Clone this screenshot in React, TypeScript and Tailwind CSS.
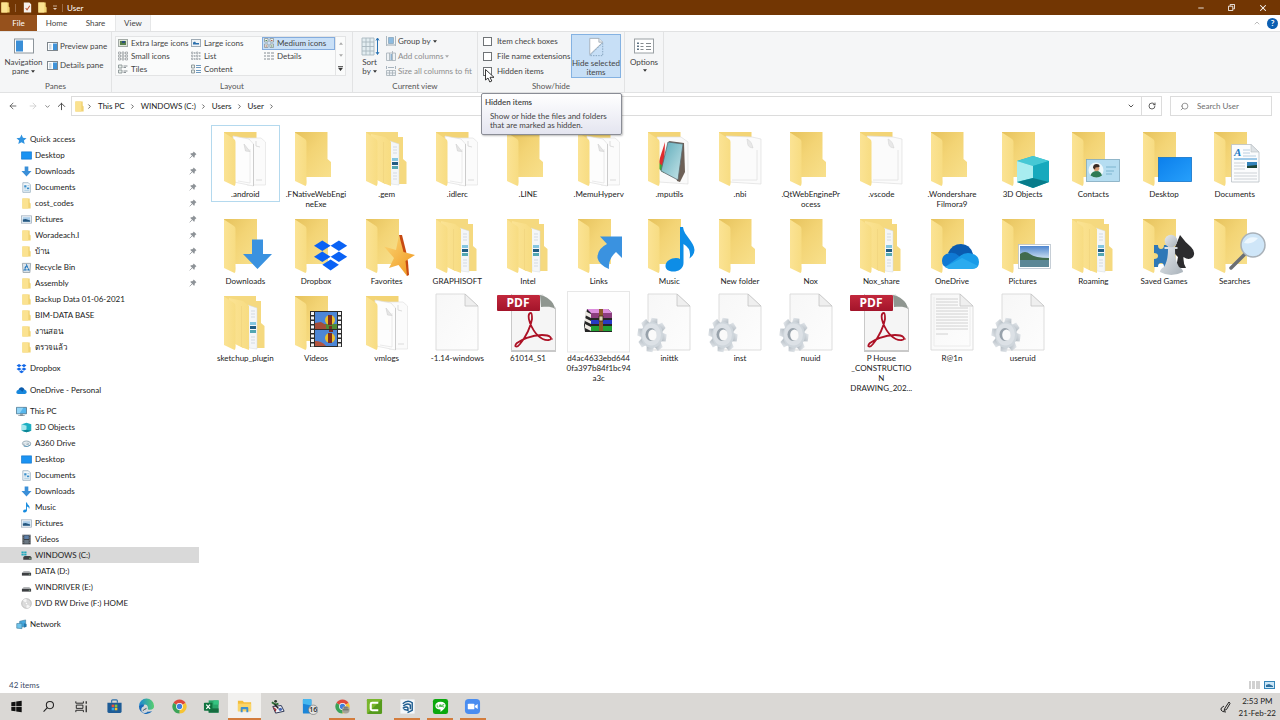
import type { ReactNode } from "react";
import {
  ArrowLeft,
  ArrowRight,
  ArrowUp,
  ChevronDown,
  ChevronRight,
  ChevronUp,
  Minus,
  RotateCw,
  Search,
  X,
} from "lucide-react";
import { clsx } from "clsx";

type Entry = {
  lines: string[];
  icon: ReactNode;
  focused?: boolean;
};

/* ---------- shared gradients ---------- */

function Gradients() {
  return (
    <svg className="absolute h-0 w-0" aria-hidden="true">
      <defs>
        <linearGradient id="flap" x1="0" y1="0" x2="1" y2="0">
          <stop offset="0" stopColor="#fbe394" />
          <stop offset="1" stopColor="#f7dc82" />
        </linearGradient>
        <linearGradient id="back" x1="0" y1="0" x2="1" y2="1">
          <stop offset="0" stopColor="#e6c25c" />
          <stop offset="0.45" stopColor="#f3d475" />
          <stop offset="1" stopColor="#f8e08c" />
        </linearGradient>
        <linearGradient id="sheet" x1="0" y1="0" x2="1" y2="1">
          <stop offset="0" stopColor="#f7f7f7" />
          <stop offset="1" stopColor="#fdfdfd" />
        </linearGradient>
        <linearGradient id="blue" x1="0" y1="0" x2="1" y2="1">
          <stop offset="0" stopColor="#0b7fec" />
          <stop offset="1" stopColor="#27a0fb" />
        </linearGradient>
        <linearGradient id="gold" x1="0" y1="0" x2="1" y2="1">
          <stop offset="0" stopColor="#fbd877" />
          <stop offset="1" stopColor="#f0951d" />
        </linearGradient>
        <linearGradient id="grey" x1="0" y1="0" x2="1" y2="1">
          <stop offset="0" stopColor="#e6eaee" />
          <stop offset="1" stopColor="#a9b2ba" />
        </linearGradient>
        <linearGradient id="sky" x1="0" y1="0" x2="0" y2="1">
          <stop offset="0" stopColor="#4f86cf" />
          <stop offset="1" stopColor="#dceaf5" />
        </linearGradient>
        <linearGradient id="red" x1="0" y1="0" x2="0" y2="1">
          <stop offset="0" stopColor="#c2283c" />
          <stop offset="1" stopColor="#a3142a" />
        </linearGradient>
        <linearGradient id="pad" x1="0" y1="0" x2="1" y2="1">
          <stop offset="0" stopColor="#5aa9b8" />
          <stop offset="1" stopColor="#c9e6ea" />
        </linearGradient>
        <linearGradient id="edge" x1="0" y1="0" x2="1" y2="0">
          <stop offset="0" stopColor="#1a86d6" />
          <stop offset="1" stopColor="#58cf6e" />
        </linearGradient>
      </defs>
    </svg>
  );
}

/* ---------- large icons, 64 x 64 ---------- */

function Big({ children }: { children: ReactNode }) {
  return (
    <svg viewBox="0 0 64 64" className="size-16 shrink-0" aria-hidden="true">
      {children}
    </svg>
  );
}

const Flap = () => <path d="M11 7.5 21 14Q22.500 15 22.500 17V54Q23 60 21.500 61L11 56Z" fill="url(#flap)" />;
const BackStraight = () => <path d="M11 7H44V52H22L11 46Z" fill="url(#back)" />;

function EmptyFolder() {
  return (
    <Big>
      <path d="M11 7H43.500V34L47 37V52H22L11 46Z" fill="url(#back)" />
      <Flap />
    </Big>
  );
}

function OverlayFolder({ children }: { children: ReactNode }) {
  return (
    <Big>
      <BackStraight />
      <Flap />
      {children}
    </Big>
  );
}

function PapersFolder() {
  return (
    <Big>
      <path d="M11 7H43.500V20H11Z" fill="#f3d475" />
      <path d="M30 13H48L52.500 17V60H34Z" fill="#fbfbfb" stroke="#e2e2e2" strokeWidth=".7" />
      <path d="M43 16v5l4 1M43 55h6" fill="none" stroke="#d4d4d4" strokeWidth=".8" />
      <path d="M20 11 36 14 40.500 19V61L21 57Z" fill="#fdfdfd" stroke="#e0e0e0" strokeWidth=".7" />
      <path d="M25 56 37 58V24" fill="none" stroke="#e4e4e4" strokeWidth=".8" />
      <path d="M31 19 32.500 26 37 26.500Z" fill="#e6e6e6" stroke="#cfcfcf" strokeWidth=".6" />
      <path d="M40.500 19V61" stroke="#cccccc" />
      <Flap />
    </Big>
  );
}

function PaperFolder() {
  return (
    <Big>
      <path d="M11 7H43.500V20H11Z" fill="#f3d475" />
      <path d="M18 11 44 12 53 14V59L21 57Z" fill="#fbfbfb" stroke="#dedede" strokeWidth=".7" />
      <path d="M24 55H49V25" fill="none" stroke="#e2e2e2" strokeWidth=".8" />
      <path d="M39 14c1 6 0 8 6 9-1-4-2-7-6-9Z" fill="#e8e8e8" stroke="#cfcfcf" strokeWidth=".5" />
      <Flap />
    </Big>
  );
}

function NestedFolder() {
  return (
    <Big>
      <path d="M11 7H43V12L48 12V34L51.500 37V59H30L11 46Z" fill="#f5d97f" />
      <path d="M35 16 44 19V60L36 59Z" fill="#f4f6f8" stroke="#d5dade" strokeWidth=".5" />
      <path d="M37 33h6v3h-6Z" fill="#84c6e0" />
      <path d="M37 37h6v3h-6Z" fill="#205c82" />
      <path d="M37 41h6v3h-6Z" fill="#53a7b2" />
      <path d="M38 22h4M38 25h4M38 28h4M38 48h4M38 51h4M38 54h4" stroke="#d3dae2" />
      <path d="M16 9 30 12 36 17V61L28 58 16 52Z" fill="url(#flap)" />
      <path d="M28.500 17V58" stroke="#efd27c" strokeWidth=".6" />
      <Flap />
    </Big>
  );
}

function MpUtilsFolder() {
  return (
    <Big>
      <path d="M11 7H43.500V20H11Z" fill="#f3d475" />
      <path d="M20 12 44 12 51 17V59L22 57Z" fill="#fafafa" stroke="#dedede" strokeWidth=".7" />
      <path d="M28 17 22 36V44L27 42Z" fill="#df2b2e" />
      <path d="M22 38 27 42V48L22 44Z" fill="#3aab35" />
      <path d="M32 16 47 18 48 47 43 57 40 56Z" fill="#6d6057" />
      <path d="M31 17 46 19 41 55 24 46Z" fill="url(#pad)" stroke="#5d686d" strokeWidth=".8" />
      <Flap />
    </Big>
  );
}

function Diamonds() {
  return (
    <g fill="#0a62f5">
      <path d="m38.300 28.500 8.300 5.300-8.300 5.300-8.300-5.300Z" />
      <path d="m54.900 28.500 8.300 5.300-8.300 5.300-8.300-5.300Z" />
      <path d="m38.300 39.500 8.300 5.300-8.300 5.300-8.300-5.300Z" />
      <path d="m54.900 39.500 8.300 5.300-8.300 5.300-8.300-5.300Z" />
      <path d="m46.600 47.500 8.300 5.300-8.300 5.700-8.300-5.700Z" />
    </g>
  );
}

function Sheet({ children }: { children?: ReactNode }) {
  return (
    <>
      <path d="M11 5H40L53 17V61H11Z" fill="url(#sheet)" stroke="#d9d9d9" strokeWidth=".9" />
      {children}
      <path d="M40 5V17H53Z" fill="#efefef" stroke="#c4c4c4" strokeWidth=".8" />
    </>
  );
}

function GearFile() {
  const teeth = [0, 45, 90, 135, 180, 225, 270, 315];
  return (
    <Big>
      <Sheet />
      <g transform="translate(1.500 2)">
        {teeth.map((angle) => (
          <path key={angle} d="M-3.500-17H3.500L4.500-10H-4.500Z" transform={`translate(13.500 44) scale(.85 1) rotate(${angle + 10})`} fill="url(#grey)" />
        ))}
        <ellipse cx="13.500" cy="44" rx="11" ry="13" fill="#cfd6dc" />
        <ellipse cx="13" cy="43.500" rx="9.500" ry="11" fill="#dce1e6" />
        <ellipse cx="12.500" cy="43.500" rx="5.500" ry="6.500" fill="#98a2ab" />
        <ellipse cx="14" cy="44" rx="4.300" ry="5.500" fill="#fafafa" />
      </g>
    </Big>
  );
}

function PdfFile() {
  return (
    <Big>
      <path d="M15 5H46L60 19V63H15Z" fill="#c9c9c9" />
      <path d="M16 5H46L59 18V61H16Z" fill="#f5f5f5" />
      <path d="M44 6C50 7 58 12 59 20 55 17 50 18 45 18Z" fill="#8f9690" />
      <rect x="1" y="6" width="43" height="16" rx="1" fill="url(#red)" />
      <text x="22" y="18" textAnchor="middle" fontSize="12" fontWeight="700" fill="#fff" fontFamily="Open Sans">
        PDF
      </text>
      <g fill="none" stroke="#ad1226" strokeWidth="1.800">
        <path d="M35 24c-3 0-3 5-1 10 4 10 11 18 19 17 4-1 2-5-7-5-11 0-21 5-25 8-4 4 0 5 3 1 6-7 11-18 12-25 0-4 0-6-1-6Z" />
      </g>
      <circle cx="56" cy="50" r=".8" fill="#ad1226" />
    </Big>
  );
}

function ArchiveFile() {
  return (
    <Big>
      <rect x=".5" y="2.500" width="62" height="60.500" fill="#fefefe" stroke="#e7e7e7" />
      <path d="M20 20 41 20 45 24V43H18L17 36Z" fill="#252525" />
      <path d="M20 20H41L45 24H24Z" fill="#dc8edd" />
      <path d="M24 24H45V29H24Z" fill="#8c3d7e" />
      <path d="M24 31H45V35H24Z" fill="#2739c4" />
      <path d="M24 37H45V42H24Z" fill="#22a033" />
      <path d="M18 22 24 25V29L18 26ZM18 29 24 32V35L18 32ZM18 35 24 38V42L18 39Z" fill="#ece8e2" />
      <path d="M32 20h4V42h-4Z" fill="#8a5a28" />
      <path d="M32 27h4v5h-4Z" fill="#d9d2b0" stroke="#3a2a18" strokeWidth=".8" />
    </Big>
  );
}

const entries: Entry[] = [
  { lines: [".android"], icon: <PapersFolder />, focused: true },
  { lines: [".FNativeWebEngi", "neExe"], icon: <EmptyFolder /> },
  { lines: [".gem"], icon: <NestedFolder /> },
  { lines: [".idlerc"], icon: <PapersFolder /> },
  { lines: [".LINE"], icon: <EmptyFolder /> },
  { lines: [".MemuHyperv"], icon: <PapersFolder /> },
  { lines: [".mputils"], icon: <MpUtilsFolder /> },
  { lines: [".nbi"], icon: <PaperFolder /> },
  { lines: [".QtWebEnginePr", "ocess"], icon: <EmptyFolder /> },
  { lines: [".vscode"], icon: <PaperFolder /> },
  { lines: [".Wondershare", "Filmora9"], icon: <EmptyFolder /> },
  {
    lines: ["3D Objects"],
    icon: (
      <OverlayFolder>
        <path d="M42 31 58 36V57L42 63 26 57V36Z" fill="#1fb5c6" />
        <path d="M42 31 58 36 42 41 26 36Z" fill="#46c8d5" />
        <path d="M26 36 42 41V53L26 57Z" fill="#a8edf0" />
        <path d="M42 41V53L58 57V36Z" fill="#17a9bd" />
        <path d="M26 57 42 53 58 57 42 63Z" fill="#087c8b" />
      </OverlayFolder>
    ),
  },
  {
    lines: ["Contacts"],
    icon: (
      <OverlayFolder>
        <rect x="25.500" y="34.500" width="33" height="22" fill="#b5ddf1" stroke="#7fa8be" strokeWidth=".8" />
        <circle cx="35" cy="45" r="7.500" fill="#eef8fb" />
        <path d="M29.500 50.500q1-4 5.500-4.500t6 4.500q-5.500 4-11.500 0Z" fill="#2f7a55" />
        <circle cx="35.500" cy="43.500" r="2.800" fill="#d9a07a" />
        <path d="M32 43q0-4 3.500-4t3 3l-4 .5-.5 2Z" fill="#3a2b24" />
        <path d="M45 42h10M45 46h8M45 49h6" stroke="#7cb5cf" />
      </OverlayFolder>
    ),
  },
  {
    lines: ["Desktop"],
    icon: (
      <OverlayFolder>
        <rect x="26.500" y="32.500" width="33" height="24" fill="url(#blue)" stroke="#1273c9" strokeWidth=".8" />
      </OverlayFolder>
    ),
  },
  {
    lines: ["Documents"],
    icon: (
      <OverlayFolder>
        <path d="M28.500 19.500H48L56 27V57H28.500Z" fill="#fbfcfd" stroke="#b9bfc4" strokeWidth=".8" />
        <path d="M48 19.500V27H56Z" fill="#dfe3e6" stroke="#b9bfc4" strokeWidth=".6" />
        <text x="31" y="31" fontSize="11" fontStyle="italic" fontWeight="700" fontFamily="Liberation Serif" fill="#1a78c2">
          A
        </text>
        <path d="M40 25h7M40 28h7M40 31h13" stroke="#a9c4d8" strokeWidth=".8" />
        <path d="M31 34H54" stroke="#3f95d2" />
        <path d="M31 38h11M31 41h11M31 44h11M31 48h23M31 51h23M31 54h23" stroke="#c3c8cd" strokeWidth=".8" />
        <path d="M44 37H54V43H44Z" fill="#3584bb" />
        <path d="M44 41 54 40V43H44Z" fill="#1d4536" />
      </OverlayFolder>
    ),
  },
  {
    lines: ["Downloads"],
    icon: (
      <OverlayFolder>
        <path d="M39 27.500H50V42H59L44.500 57 30 42H39Z" fill="#3a92e0" />
      </OverlayFolder>
    ),
  },
  {
    lines: ["Dropbox"],
    icon: (
      <OverlayFolder>
        <Diamonds />
      </OverlayFolder>
    ),
  },
  {
    lines: ["Favorites"],
    icon: (
      <OverlayFolder>
        <path d="M44 23 47 23 51 39 53 50 54 63 52 64 47 50Z" fill="#c74a12" />
        <path d="M44 23 48.500 40 60 43 50.500 49 52 64 43.500 53 34 56 39 46 29 34.500 41 38Z" fill="url(#gold)" />
      </OverlayFolder>
    ),
  },
  { lines: ["GRAPHISOFT"], icon: <NestedFolder /> },
  { lines: ["Intel"], icon: <NestedFolder /> },
  {
    lines: ["Links"],
    icon: (
      <OverlayFolder>
        <path d="M33 24.500H55V46L49 40Q41 47 42 57 32 53 30.500 46 30 37 40 32Z" fill="#3a92e0" />
      </OverlayFolder>
    ),
  },
  {
    lines: ["Music"],
    icon: (
      <OverlayFolder>
        <path d="M43 15H46C47 24 57 29 57.500 38Q57.500 43 52.500 46.500 55 37 46.500 32V51C46.500 57 41 59.500 36.500 59.500 31 59.500 28.500 57 28.500 54 28.500 49 34 46 39 46Q42 46 43 47Z" fill="#0d8de6" />
      </OverlayFolder>
    ),
  },
  { lines: ["New folder"], icon: <EmptyFolder /> },
  { lines: ["Nox"], icon: <EmptyFolder /> },
  { lines: ["Nox_share"], icon: <NestedFolder /> },
  {
    lines: ["OneDrive"],
    icon: (
      <OverlayFolder>
        <path d="M28 41Q32 32 41 32 50 32 53 42L40 50Z" fill="#0a5bb0" />
        <path d="M22 49Q22 42 30 41 36 40 41 46L57 56H30Q22 56 22 49Z" fill="#0f79d4" />
        <path d="M39 45Q45 39 53 42 59 44 59 50 59 57 52 57H29L25 55Z" fill="#189be8" />
        <path d="M25 55 42 46 58 54Q55 57 52 57H29Z" fill="#32b2f2" opacity=".7" />
      </OverlayFolder>
    ),
  },
  {
    lines: ["Pictures"],
    icon: (
      <OverlayFolder>
        <rect x="27.500" y="32.500" width="32" height="24" fill="#fff" stroke="#b8c3cc" strokeWidth=".8" />
        <path d="M29 34H58V48H29Z" fill="url(#sky)" />
        <path d="M29 42q5-4 10 0t19 4v3H29Z" fill="#416b4e" />
        <path d="M29 48H58V55H29Z" fill="#5b8796" />
      </OverlayFolder>
    ),
  },
  { lines: ["Roaming"], icon: <NestedFolder /> },
  {
    lines: ["Saved Games"],
    icon: (
      <OverlayFolder>
        <path d="M22 33h4q0 4 3 4t3-4h4V55h-4q0-4-3-4t-3 4h-4V47q4 0 4-3t-4-3Z" fill="#2f78b7" />
        <path d="M48 23Q53 30 59 35 64 40 61 45 57 49 51.500 45 51 51 54 56H44L46 45 41 40Z" fill="#2c2c2e" />
        <path d="M32.500 35h13v2H43q0 12 4 18 4 2 4 5-12 6-23 0 0-3 4-5 4-6 4-18h-3.500Z" fill="url(#grey)" />
        <circle cx="39" cy="29" r="6.300" fill="url(#grey)" />
      </OverlayFolder>
    ),
  },
  {
    lines: ["Searches"],
    icon: (
      <OverlayFolder>
        <path d="M42 42 28 56" stroke="#6b6f74" strokeWidth="3.500" strokeLinecap="round" />
        <circle cx="50" cy="33" r="12" fill="#cfe6f8" stroke="#a9b1b8" strokeWidth="1.500" />
        <path d="M41 31Q45 23 55 26 50 33 41 31Z" fill="#edf7fe" />
      </OverlayFolder>
    ),
  },
  { lines: ["sketchup_plugin"], icon: <NestedFolder /> },
  {
    lines: ["Videos"],
    icon: (
      <OverlayFolder>
        <rect x="26" y="22" width="32" height="36" fill="#2b2b2b" />
        <path d="M28.500 23V58M55.500 23V58" stroke="#f4f4f4" strokeWidth="3" strokeDasharray="3 1.500" />
        <rect x="31" y="23" width="22" height="17" fill="#4c86d6" />
        <rect x="31" y="41" width="22" height="16" fill="#4c86d6" />
        <path d="M31 35h22v5H31Z" fill="#4f8a35" />
        <path d="M31 34l6-1 5 3v4H31Z" fill="#a44d38" />
        <path d="M31 52q7 0 11 5H31Z" fill="#b3543f" />
        <circle cx="46" cy="31" r="5" fill="#ebc02c" />
        <path d="M44 26h4v10h-4ZM45 37h3v3h-3Z" fill="#7c2c1f" />
        <circle cx="46" cy="49" r="5" fill="#ebc02c" />
        <path d="M44 44h4v10h-4ZM45 41h4v2h-4Z" fill="#7c2c1f" />
      </OverlayFolder>
    ),
  },
  { lines: ["vmlogs"], icon: <PapersFolder /> },
  { lines: ["-1.14-windows"], icon: <Big><Sheet /></Big> },
  { lines: ["61014_S1"], icon: <PdfFile /> },
  { lines: ["d4ac4633ebd644", "0fa397b84f1bc94", "a3c"], icon: <ArchiveFile /> },
  { lines: ["inittk"], icon: <GearFile /> },
  { lines: ["inst"], icon: <GearFile /> },
  { lines: ["nuuid"], icon: <GearFile /> },
  { lines: ["P House", "_CONSTRUCTIO", "N", "DRAWING_202..."], icon: <PdfFile /> },
  {
    lines: ["R@1n"],
    icon: (
      <Big>
        <Sheet>
          <path
            d="M16 10h22M16 13h22M16 16h22M16 19h32M16 22h32M16 25h32M16 28h32M16 31h32M16 34h32M16 37h32M16 40h32M16 45h12"
            stroke="#cdcdcd"
            strokeWidth=".9"
          />
          <path d="M14 8V57H50V18" fill="none" stroke="#ececec" />
        </Sheet>
      </Big>
    ),
  },
  { lines: ["useruid"], icon: <GearFile /> },
];

/* ---------- small icons, 12 x 12 ---------- */

const smallShapes: Record<string, ReactNode> = {
  folder: (
    <>
      <path d="M1.500 .5H9.500V5L10.500 6V11.500H1.500Z" fill="#f0d272" />
      <path d="M1.500 .5H8V11.500H1.500Z" fill="#fbe290" />
    </>
  ),
  star: <path d="M6 .5 7.600 4.200 11.500 4.500 8.600 7.100 9.500 11 6 9 2.500 11 3.400 7.100.5 4.500 4.400 4.200Z" fill="#2f93e0" />,
  desktop: <path d="M.5 2H11.500V10H.5Z" fill="#1b93f2" stroke="#1173c8" strokeWidth=".7" />,
  download: <path d="M4 .5H8V5.500H11.500L6 11.500.5 5.500H4Z" fill="#3a8fd8" />,
  document: (
    <>
      <path d="M2 .8H8L10.200 3V11.300H2Z" fill="#f3f8fb" stroke="#8fa9ba" strokeWidth=".8" />
      <path d="M3.500 3.500H6V6H3.500ZM6.500 6H9V8H6.500Z" fill="#3c8fca" />
      <path d="M7 4h2M3.500 7.500H6M3.500 9.500H9" stroke="#7fb1d2" strokeWidth=".7" />
    </>
  ),
  picture: (
    <>
      <rect x=".5" y="2" width="11" height="8" fill="#eef4f9" stroke="#9aaab8" strokeWidth=".8" />
      <path d="M2 3.500H10V8.500H2Z" fill="#a9cdea" />
      <path d="M2 6 5 5.500 10 7V8.500H2Z" fill="#26577f" />
    </>
  ),
  recycle: (
    <>
      <path d="M1.500 1.500H10.500L9.700 11.500H2.300Z" fill="#dce4ea" stroke="#8b979f" strokeWidth=".8" />
      <path d="M6 3.500 8.500 8.500H3.500Z" fill="none" stroke="#2277bd" strokeWidth="1.400" strokeDasharray="3 1" />
    </>
  ),
  dropbox: (
    <path
      d="m3.300 1 2.700 1.800-2.700 1.800L.6 2.800ZM8.700 1l2.700 1.800-2.700 1.800L6 2.800ZM3.300 4.800 6 6.600 3.300 8.400.6 6.600ZM8.700 4.800l2.700 1.800-2.700 1.800L6 6.600ZM6 7.800l2.700 1.800L6 11.300 3.300 9.600Z"
      fill="#1268e8"
    />
  ),
  onedrive: (
    <>
      <path d="M2.500 6Q3.500 2.500 6.300 2.500 8.500 2.600 9.500 5.500L6 9Z" fill="#0b5cad" />
      <path d="M.3 8Q.3 5.500 3 5.300 5 5 7 7.500 8 5 9.800 5.300 11.800 6 11.700 7.800 11.500 9.800 9.500 9.800H2.300Q.3 9.800.3 8Z" fill="#1787dc" />
    </>
  ),
  pc: (
    <>
      <path d="M.5 1.500H11.500V8.500H.5Z" fill="#57b6ec" stroke="#4a6b80" strokeWidth=".8" />
      <path d="M1 2H8L4 8H1Z" fill="#93d5f7" />
      <path d="M4.500 9h3v1H9.500V11H2.500V10h2Z" fill="#7d8c96" />
    </>
  ),
  cube: (
    <>
      <path d="M6 .8 11.200 2.500V9.500L6 11.300.8 9.500V2.500Z" fill="#1eafc2" />
      <path d="M.8 2.500 6 4V8.500L.8 9.500Z" fill="#a5e8ed" />
      <path d="M.8 9.500 6 8.500 11.200 9.500 6 11.300Z" fill="#0c8594" />
    </>
  ),
  a360: (
    <>
      <path d="M.8 6Q2 2.500 6 2.700 10.500 3 11.200 6 10 9.500 6 9.500 2 9.300.8 6Z" fill="#a9b8c2" />
      <path d="M2 6Q4 4 7 4.500T9 7.500Q6 9 4.500 7T7 5.800" fill="none" stroke="#eef4f7" strokeWidth="1.100" />
      <path d="M3 8.800Q7 10.500 10.500 7.500" fill="none" stroke="#4e90b5" strokeWidth=".9" />
    </>
  ),
  music: <path d="M5.500.5H6.500Q6.800 2.500 8.500 3.800 10 5.500 8.800 7.500 8.800 5.500 6.500 5V9.500Q6 11.500 4 11.500 2 11.300 2.200 9.700 2.700 8.200 5.500 8.300Z" fill="#168bdf" />,
  video: (
    <>
      <path d="M1.500.8H10.500V11.300H1.500Z" fill="#3b3f44" />
      <path d="M3.500 1.500H8.500V5.500H3.500Z" fill="#5d7fa8" />
      <path d="M3.500 6.500H8.500V10.500H3.500Z" fill="#6b7883" />
      <path d="M2.300 1V11M9.700 1V11" stroke="#c4c9cc" strokeWidth=".8" strokeDasharray="1 1" />
    </>
  ),
  windrive: (
    <>
      <path d="M.5 1.500H3V3.500H.5ZM3.500 1.500H6V3.500H3.500ZM.5 4H3V6H.5ZM3.500 4H6V6H3.500Z" fill="#20a9bd" />
      <path d="M2.500 7.500 4 6.500H10L11.500 8V10.500H2.500Z" fill="#3f4144" />
      <path d="M9 9h1.500" stroke="#8be08d" />
    </>
  ),
  drive: (
    <>
      <path d="M1 7.500 3 5.500H9L11 7.500Z" fill="#b5b8ba" />
      <path d="M1 7.500H11V10.500H1Z" fill="#3d3f42" />
      <path d="M8.500 9H10" stroke="#a7e0aa" strokeWidth=".7" />
    </>
  ),
  disc: (
    <>
      <circle cx="6" cy="6" r="5.300" fill="#dcdcdc" stroke="#a8a8a8" strokeWidth=".7" />
      <path d="M6 6 2 2.500Q4 .8 6 1ZM6 6 10 9.500Q8 11.200 6 11Z" fill="#f6f6f6" />
      <circle cx="6" cy="6" r="1.300" fill="#fff" stroke="#b5b5b5" strokeWidth=".5" />
    </>
  ),
  network: (
    <>
      <path d="M4 2.500 10.500 1V8L4 9Z" fill="#46a9df" stroke="#35718f" strokeWidth=".6" />
      <path d="M.8 5 6.500 4.500V10.500L.8 10Z" fill="#70c4ec" stroke="#35718f" strokeWidth=".6" />
      <path d="M8.500 4.500 11.500 5.500V8.500L8.500 9.500Z" fill="#2477ab" />
    </>
  ),
};

function SmallIcon({ name }: { name: string }) {
  return (
    <svg viewBox="0 0 12 12" className="size-[11px] shrink-0" aria-hidden="true">
      {smallShapes[name]}
    </svg>
  );
}

function PinIcon() {
  return (
    <svg viewBox="0 0 12 12" className="size-2 shrink-0" aria-hidden="true">
      <path d="M7 .8 11.200 5 10 5.500 8.500 7V9.500L7.500 10 2 4.500 2.800 3.500H5L6.500 2Z" fill="#8d9297" />
      <path d="M4.500 7.500 1 11" stroke="#8d9297" strokeWidth="1.200" />
    </svg>
  );
}

/* ---------- navigation pane ---------- */

type Node = { icon: string; label: string; pinned?: boolean; current?: boolean };

const tree: { root: Node; children: Node[]; gap: string }[] = [
  {
    root: { icon: "star", label: "Quick access" },
    gap: "mt-0",
    children: [
      { icon: "desktop", label: "Desktop", pinned: true },
      { icon: "download", label: "Downloads", pinned: true },
      { icon: "document", label: "Documents", pinned: true },
      { icon: "folder", label: "cost_codes", pinned: true },
      { icon: "picture", label: "Pictures", pinned: true },
      { icon: "folder", label: "Woradeach.I", pinned: true },
      { icon: "folder", label: "บ้าน", pinned: true },
      { icon: "recycle", label: "Recycle Bin", pinned: true },
      { icon: "folder", label: "Assembly", pinned: true },
      { icon: "folder", label: "Backup Data 01-06-2021" },
      { icon: "folder", label: "BIM-DATA BASE" },
      { icon: "folder", label: "งานสอน" },
      { icon: "folder", label: "ตรวจแล้ว" },
    ],
  },
  { root: { icon: "dropbox", label: "Dropbox" }, gap: "mt-[5px]", children: [] },
  { root: { icon: "onedrive", label: "OneDrive - Personal" }, gap: "mt-1.5", children: [] },
  {
    root: { icon: "pc", label: "This PC" },
    gap: "mt-[5px]",
    children: [
      { icon: "cube", label: "3D Objects" },
      { icon: "a360", label: "A360 Drive" },
      { icon: "desktop", label: "Desktop" },
      { icon: "document", label: "Documents" },
      { icon: "download", label: "Downloads" },
      { icon: "music", label: "Music" },
      { icon: "picture", label: "Pictures" },
      { icon: "video", label: "Videos" },
      { icon: "windrive", label: "WINDOWS (C:)", current: true },
      { icon: "drive", label: "DATA (D:)" },
      { icon: "drive", label: "WINDRIVER (E:)" },
      { icon: "disc", label: "DVD RW Drive (F:) HOME" },
    ],
  },
  { root: { icon: "network", label: "Network" }, gap: "mt-[5px]", children: [] },
];

function TreeRow({ node, nested }: { node: Node; nested?: boolean }) {
  return (
    <button
      type="button"
      className={clsx(
        "flex h-4 w-full items-center gap-[3px] pr-0.5 text-left",
        nested ? "pl-[21px]" : "pl-4",
        node.current && "bg-[#d9d9d9]",
      )}
    >
      <SmallIcon name={node.icon} />
      <span className="grow whitespace-nowrap">{node.label}</span>
      {node.pinned && <PinIcon />}
    </button>
  );
}

function NavigationPane() {
  return (
    <nav aria-label="Folders" className="w-[199px] shrink-0 pt-[11px]">
      {tree.map((group) => (
        <div key={group.root.label} className={group.gap}>
          <TreeRow node={group.root} />
          {group.children.map((child) => (
            <TreeRow key={child.label} node={child} nested />
          ))}
        </div>
      ))}
    </nav>
  );
}

/* ---------- title bar and tabs ---------- */

function TitleBar() {
  return (
    <header className="flex h-[15px] items-center bg-[#723603] text-white">
      <SmallIcon name="folder" />
      <span className="mx-1 h-2 w-px bg-[#9b6a42]" />
      <button type="button" aria-label="Properties" className="mr-1 ml-0.5">
        <svg viewBox="0 0 12 12" className="size-[11px]">
          <path d="M2 .5H8L10 2.500V11.500H2Z" fill="#f6f1ec" />
          <path d="M4 6.500 5.500 8.500 8.500 4" fill="none" stroke="#c3542c" strokeWidth="1.100" />
        </svg>
      </button>
      <button type="button" aria-label="New folder" className="mr-1">
        <SmallIcon name="folder" />
      </button>
      <button type="button" aria-label="Customize toolbar">
        <svg viewBox="0 0 6 6" className="size-[6px]">
          <path d="M1 1H5" stroke="#e0cdbd" strokeWidth=".8" />
          <path d="M1 3H5L3 5Z" fill="#e0cdbd" />
        </svg>
      </button>
      <span className="mx-1 h-2 w-px bg-[#9b6a42]" />
      <span>User</span>
      <div className="ml-auto flex items-center">
        <button type="button" aria-label="Minimize" className="flex w-[30px] justify-center">
          <Minus size={8} strokeWidth={2.500} />
        </button>
        <button type="button" aria-label="Restore" className="flex w-[30px] justify-center">
          <svg viewBox="0 0 8 8" className="size-[7px]" fill="none" stroke="#fff">
            <path d="M.5 2.500H5.500V7.500H.5Z" />
            <path d="M2.500 2V.5H7.500V5.500H6" />
          </svg>
        </button>
        <button type="button" aria-label="Close" className="flex w-[34px] justify-center">
          <X size={10} strokeWidth={2.500} />
        </button>
      </div>
    </header>
  );
}

function TabRow() {
  return (
    <div className="flex h-4 items-stretch text-[#444]">
      <button type="button" className="w-[37px] bg-[#96511c] text-white">
        File
      </button>
      <button type="button" className="w-[39px]">Home</button>
      <button type="button" className="w-[39px]">Share</button>
      <button type="button" className="w-[36px] border-x border-[#e6e7e8] bg-[#f5f6f7]">View</button>
      <div className="ml-auto flex items-center gap-1.5 pr-0.5">
        <button type="button" aria-label="Collapse ribbon">
          <ChevronUp size={8} className="text-[#9a9a9a]" />
        </button>
        <button
          type="button"
          aria-label="Help"
          className="flex size-[11px] items-center justify-center rounded-full bg-[#0c5fb2] font-bold text-white"
        >
          ?
        </button>
      </div>
    </div>
  );
}

/* ---------- ribbon ---------- */

function Caret({ faded }: { faded?: boolean }) {
  return (
    <svg viewBox="0 0 6 4" className="ml-0.5 inline-block h-[3px] w-1" aria-hidden="true">
      <path d="M0 0H6L3 4Z" fill={faded ? "#a8a8a8" : "#333"} />
    </svg>
  );
}

function RibbonGroup({ label, className, children }: { label: string; className: string; children: ReactNode }) {
  return (
    <section className={clsx("flex shrink-0 flex-col border-r border-[#e2e3e4]", className)}>
      <div className="flex grow">{children}</div>
      <div className="h-[11px] text-center leading-[10px] text-[#555]">{label}</div>
    </section>
  );
}

function PaneIcon() {
  return (
    <svg viewBox="0 0 11 9" className="h-[9px] w-[11px] shrink-0" aria-hidden="true">
      <rect x=".5" y=".5" width="10" height="8" fill="#fff" stroke="#7e868c" />
      <path d="M2 2H4.500V7.500H2Z" fill="#cfdce6" />
      <path d="M6 1.500H10V8H6Z" fill="#3f93d9" />
    </svg>
  );
}

const layoutShapes: Record<string, ReactNode> = {
  "Extra large icons": (
    <>
      <rect x=".5" y="1.500" width="9" height="7" fill="#dfe5d8" stroke="#a3aaa6" />
      <path d="M2 3H8V7H2Z" fill="#557f4a" />
      <path d="M4 3H7V5H4Z" fill="#2b4d7d" />
    </>
  ),
  "Large icons": (
    <>
      <rect x=".5" y="1.500" width="9" height="7" fill="#eef3f7" stroke="#9fabb5" />
      <path d="M2 4.500 4 3.500 5 5H8V6.500H2Z" fill="#2c70ad" />
    </>
  ),
  "Medium icons": (
    <>
      <path d="M.5.5H4V4H.5ZM6 .5H9.500V4H6ZM.5 6H4V9.500H.5ZM6 6H9.500V9.500H6Z" fill="#edf3ee" stroke="#8b9698" strokeWidth=".8" />
      <path d="M1.500 2H3V3H1.500ZM7 7.500H8.500V8.500H7Z" fill="#4d8a5c" />
      <path d="M7 2H8.500V3H7ZM1.500 7.500H3V8.500H1.500Z" fill="#b46357" />
    </>
  ),
  "Small icons": <path d="M.5 1H2.500V3H.5ZM4 1H6V3H4ZM7.500 1H9.500V3H7.500ZM.5 4H2.500V6H.5ZM4 4H6V6H4ZM7.500 4H9.500V6H7.500ZM.5 7H2.500V9H.5ZM4 7H6V9H4ZM7.500 7H9.500V9H7.500Z" fill="none" stroke="#8f9599" strokeWidth=".7" />,
  List: (
    <>
      <path d="M.5 1H2V2.500H.5ZM.5 4H2V5.500H.5ZM.5 7H2V8.500H.5ZM5.500 1H7V2.500H5.500ZM5.500 4H7V5.500H5.500ZM5.500 7H7V8.500H5.500Z" fill="none" stroke="#899197" strokeWidth=".6" />
      <path d="M3 2H4.500M3 5H4.500M3 8H4.500M8 2H9.500M8 5H9.500M8 8H9.500" stroke="#6e7980" />
    </>
  ),
  Details: <path d="M0 2H2M0 5H2M0 8H2M3 2H6M3 5H6M3 8H6M7 2H10M7 5H10M7 8H10" stroke="#848c92" />,
  Tiles: (
    <>
      <path d="M.5 1H4V4H.5ZM.5 6H4V9H.5Z" fill="#e8efea" stroke="#7f898b" strokeWidth=".8" />
      <path d="M5.500 2H9.500M5.500 3.500H8M5.500 7H9.500M5.500 8.500H8" stroke="#70797f" strokeWidth=".8" />
    </>
  ),
  Content: (
    <>
      <path d="M.5 1H3.500V4H.5ZM.5 6H3.500V9H.5Z" fill="#e8efea" stroke="#7f898b" strokeWidth=".8" />
      <path d="M5 1.500H10M5 3.500H10M5 6.500H10M5 8.500H10" stroke="#5f8eb8" strokeWidth=".9" />
    </>
  ),
};

const layouts = [
  "Extra large icons",
  "Large icons",
  "Medium icons",
  "Small icons",
  "List",
  "Details",
  "Tiles",
  "Content",
];

function LayoutGallery() {
  return (
    <div className="mr-1.5 ml-[3px] mt-1 flex h-10 grow border border-[#e3e4e5] bg-[#fafbfb]">
      <div className="grid grow grid-cols-3 grid-rows-3">
        {layouts.map((name) => (
          <button
            key={name}
            type="button"
            className={clsx(
              "flex items-center gap-[3px] border pl-px text-left whitespace-nowrap",
              name === "Medium icons" ? "border-[#84acdd] bg-[#c9e0f7]" : "border-transparent",
            )}
          >
            <svg viewBox="0 0 10 10" className="size-2.5 shrink-0" aria-hidden="true">
              {layoutShapes[name]}
            </svg>
            {name}
          </button>
        ))}
      </div>
      <div className="flex w-2.5 flex-col items-center justify-around border-l border-[#e3e4e5]">
        <button type="button" aria-label="Scroll up" className="flex h-3 items-center">
          <svg viewBox="0 0 6 4" className="h-[3px] w-1">
            <path d="M0 4H6L3 0Z" fill="#aaa" />
          </svg>
        </button>
        <button type="button" aria-label="Scroll down" className="flex h-3 items-center">
          <svg viewBox="0 0 6 4" className="h-[3px] w-1">
            <path d="M0 0H6L3 4Z" fill="#aaa" />
          </svg>
        </button>
        <button type="button" aria-label="More layouts" className="flex h-3 items-center">
          <svg viewBox="0 0 6 6" className="size-[5px]">
            <path d="M0 .5H6" stroke="#333" />
            <path d="M0 2H6L3 6Z" fill="#333" />
          </svg>
        </button>
      </div>
    </div>
  );
}

function Pointer() {
  return (
    <svg viewBox="0 0 10 14" className="absolute top-1 left-0.5 h-[14px] w-2.5" aria-hidden="true">
      <path d="M.5.5V11L3 9 4.800 13 6.800 12 5 8.300H9Z" fill="#fff" stroke="#222" strokeWidth=".9" />
    </svg>
  );
}

const toggles = ["Item check boxes", "File name extensions", "Hidden items"];

function ShowHideGroup() {
  return (
    <RibbonGroup label="Show/hide" className="relative w-[147px]">
      <div className="flex grow flex-col gap-[3px] pt-[3px] pl-[5px]">
        {toggles.map((name) => (
          <label key={name} className="relative flex h-3 items-center gap-[5px] whitespace-nowrap">
            <input type="checkbox" className="size-[9px] shrink-0 appearance-none border border-[#6f7376] bg-white" />
            {name}
            {name === "Hidden items" && <Pointer />}
          </label>
        ))}
      </div>
      <button
        type="button"
        className="mt-0.5 mr-[3px] flex h-11 w-[50px] shrink-0 flex-col items-center border border-[#84b2e2] bg-[#c7dff6] pt-px leading-[9px]"
      >
        <svg viewBox="0 0 20 24" className="h-6 w-5" aria-hidden="true">
          <path d="M3.500 2.500H13L17 6.500 3.500 19.500Z" fill="#fff" stroke="#9aa5ae" strokeWidth=".8" />
          <path d="M13 2.500V6.500H17" fill="#e3e8ec" stroke="#9aa5ae" strokeWidth=".8" />
          <path d="M17 7.500V20.500H3.500L16 8" fill="none" stroke="#7d9cb8" strokeWidth=".9" strokeDasharray="1.500 1.200" />
        </svg>
        <span className="whitespace-nowrap">Hide selected</span>
        <span>items</span>
      </button>
      <div
        role="tooltip"
        className="absolute top-[61px] left-[3px] z-10 h-[42px] w-[141px] rounded-[2px] border border-[#8a8d96] bg-linear-to-b from-white to-[#e4e5f0] px-[3px] pt-[3px] text-[#444] shadow-[1px_1px_2px_rgba(0,0,0,0.25)]"
      >
        <p className="leading-[10px] font-semibold">Hidden items</p>
        <p className="mt-[5px] pl-[5px] leading-[9px] whitespace-nowrap">
          Show or hide the files and folders
          <br />
          that are marked as hidden.
        </p>
      </div>
    </RibbonGroup>
  );
}

function Ribbon() {
  return (
    <div className="flex h-[62px] border-y border-[#e1e2e3] bg-[#f5f6f7] text-[#444]">
      <RibbonGroup label="Panes" className="w-28">
        <button type="button" className="flex w-[47px] shrink-0 flex-col items-center pt-1.5 leading-[9px]">
          <svg viewBox="0 0 20 16" className="mb-1 h-4 w-5" aria-hidden="true">
            <rect x=".5" y="1" width="19" height="14" fill="#fff" stroke="#8d959b" />
            <path d="M2 2.500H9V13.500H2Z" fill="#3b8fd7" />
          </svg>
          <span>Navigation</span>
          <span>
            pane
            <Caret />
          </span>
        </button>
        <div className="flex flex-col gap-[7px] pt-2 whitespace-nowrap">
          <button type="button" className="flex h-3 items-center gap-0.5">
            <PaneIcon />
            Preview pane
          </button>
          <button type="button" className="flex h-3 items-center gap-0.5">
            <PaneIcon />
            Details pane
          </button>
        </div>
      </RibbonGroup>

      <RibbonGroup label="Layout" className="w-[241px]">
        <LayoutGallery />
      </RibbonGroup>

      <RibbonGroup label="Current view" className="w-[125px]">
        <button type="button" className="flex w-[33px] shrink-0 flex-col items-center pt-1 leading-[9px]">
          <svg viewBox="0 0 20 20" className="mb-0.5 size-5" aria-hidden="true">
            <path d="M2 2H14V19H2ZM6 2V19M10 2V19M2 6H14M2 10.500H14M2 15H14" fill="#e3edf1" stroke="#a9b8bf" strokeWidth=".9" />
            <path d="M17.500 2.500V18M16 4.500 17.500 2 19 4.500M16 16 17.500 18.500 19 16" fill="none" stroke="#2b74b3" />
          </svg>
          <span>Sort</span>
          <span>
            by
            <Caret />
          </span>
        </button>
        <div className="flex flex-col gap-[3px] pt-[3px] whitespace-nowrap">
          <button type="button" className="flex h-3 items-center gap-0.5">
            <svg viewBox="0 0 10 10" className="size-2.5" aria-hidden="true">
              <path d="M.5 0V10M9.500 0V10" stroke="#9ba9b3" strokeWidth=".8" />
              <path d="M2.500 1.500H7.500V7.500H2.500Z" fill="#8dbbe0" stroke="#7797ad" strokeWidth=".6" />
              <path d="M1 9H9" stroke="#9ba9b3" />
            </svg>
            <span>
              Group by
              <Caret />
            </span>
          </button>
          <button type="button" className="flex h-3 items-center gap-0.5 text-[#8d8d8d]">
            <svg viewBox="0 0 10 10" className="size-2.5" aria-hidden="true">
              <path d="M.5 2H9.500V9.500H.5ZM3.500 2V9.500M6.500 0V9.500" fill="#eef2f5" stroke="#a4aeb6" strokeWidth=".8" />
              <path d="M4.500 3H6V9H4.500Z" fill="#8fb2cf" />
            </svg>
            <span>
              Add columns
              <Caret faded />
            </span>
          </button>
          <button type="button" className="flex h-3 items-center gap-0.5 text-[#8d8d8d]">
            <svg viewBox="0 0 10 10" className="size-2.5" aria-hidden="true">
              <path d="M.5 4.500H9.500V9.500H.5ZM.5 7H9.500M3.500 4.500V9.500M6.500 4.500V9.500" fill="#eef2f5" stroke="#a4aeb6" strokeWidth=".8" />
              <path d="M.5 0V3M9.500 0V3M2 1.500H8" stroke="#94a3ae" strokeWidth=".8" />
            </svg>
            Size all columns to fit
          </button>
        </div>
      </RibbonGroup>

      <ShowHideGroup />

      <section className="w-[39px] border-r border-[#e2e3e4]">
        <button type="button" className="flex w-full flex-col items-center pt-1.5 leading-[9px]">
          <svg viewBox="0 0 20 16" className="mb-1 h-4 w-5" aria-hidden="true">
            <rect x=".5" y="1" width="19" height="14" fill="#fff" stroke="#9aa0a4" />
            <path d="M3 4.500H5V6H3ZM3 7.500H5V9H3ZM3 10.500H5V12H3Z" fill="#5e7384" />
            <path d="M6.500 5.500H9.500M6.500 8.500H9.500M6.500 11.500H9.500M12 5.500H17M12 8.500H17M12 11.500H17" stroke="#84898d" />
          </svg>
          <span className="mb-0.5">Options</span>
          <Caret />
        </button>
      </section>
    </div>
  );
}

/* ---------- address row ---------- */

const crumbs = ["This PC", "WINDOWS (C:)", "Users", "User"];

function AddressRow() {
  return (
    <div className="flex items-center pt-[3px] pr-2 pl-2">
      <button type="button" aria-label="Back">
        <ArrowLeft size={10} className="text-[#555]" />
      </button>
      <button type="button" aria-label="Forward" className="ml-2.5">
        <ArrowRight size={10} className="text-[#ccc]" />
      </button>
      <button type="button" aria-label="Recent locations" className="ml-1.5">
        <ChevronDown size={7} strokeWidth={3} className="text-[#777]" />
      </button>
      <button type="button" aria-label="Up" className="mr-1 ml-[5px]">
        <ArrowUp size={11} className="text-[#444]" />
      </button>
      <div className="flex h-5 grow items-center border border-[#dcdcdc] pl-0.5">
        <SmallIcon name="folder" />
        <ChevronRight size={7} strokeWidth={3} className="ml-px text-[#555]" />
        {crumbs.map((crumb) => (
          <span key={crumb} className="flex items-center">
            <a href="#" className="mr-1 ml-[5px]">
              {crumb}
            </a>
            <ChevronRight size={7} strokeWidth={3} className="text-[#555]" />
          </span>
        ))}
        <button type="button" aria-label="Previous locations" className="mr-1.5 ml-auto">
          <ChevronDown size={8} strokeWidth={3} className="text-[#555]" />
        </button>
        <button type="button" aria-label="Refresh" className="flex h-full w-5 items-center justify-center border-l border-[#dcdcdc]">
          <RotateCw size={8} strokeWidth={2.500} className="text-[#444]" />
        </button>
      </div>
      <label className="ml-2 flex h-5 w-[102px] items-center gap-2 border border-[#dcdcdc] pl-[9px]">
        <Search size={9} className="shrink-0 -scale-x-100 text-[#777]" />
        <input
          type="search"
          aria-label="Search User"
          placeholder="Search User"
          className="w-full min-w-0 outline-none placeholder:text-[#6d6d6d]"
        />
      </label>
    </div>
  );
}

/* ---------- file area ---------- */

function FileGrid() {
  return (
    <main className="grid grow grid-cols-15 content-start pt-[5px] pr-2.5 pl-[11px]">
      {entries.map((entry) => (
        <button
          key={entry.lines.join("")}
          type="button"
          className={clsx(
            "mx-px flex flex-col items-center self-start pb-[3px]",
            entry.focused && "outline outline-[#b4d9ee] -outline-offset-1",
          )}
        >
          {entry.icon}
          {entry.lines.map((line) => (
            <span key={line} className="h-2.5 leading-[10px] whitespace-nowrap">
              {line}
            </span>
          ))}
        </button>
      ))}
    </main>
  );
}

function StatusBar() {
  return (
    <footer className="flex h-4 items-center pr-[5px] pl-[9px] text-[#3a4a66]">
      <span>42 items</span>
      <button type="button" aria-label="Details view" className="ml-auto">
        <svg viewBox="0 0 11 8" className="h-2 w-[11px]">
          <path d="M0 1H2M0 3H2M0 5H2M0 7H2M3 1H6M3 3H6M3 5H6M3 7H6M7 1H11M7 3H11M7 5H11M7 7H11" stroke="#8b8b8b" strokeWidth=".8" />
        </svg>
      </button>
      <button type="button" aria-label="Icon view" className="ml-1">
        <svg viewBox="0 0 11 8" className="h-2 w-[11px]">
          <rect x=".5" y=".5" width="10" height="7" fill="#cbe6f7" stroke="#3585b8" />
          <path d="M2 6V4L5 3 9 5V6Z" fill="#2d6f9e" />
        </svg>
      </button>
    </footer>
  );
}

/* ---------- taskbar ---------- */

function ChromeLogo() {
  return (
    <>
      <path d="M9 9 2.500 5.200A7.500 7.500 0 0 1 15.500 5.300Z" fill="#df4a3c" />
      <path d="M9 9 15.500 5.200A7.500 7.500 0 0 1 9 16.500Z" fill="#f6c433" />
      <path d="M9 9 9 16.500A7.500 7.500 0 0 1 2.500 5.200Z" fill="#3ba357" />
      <circle cx="9" cy="9" r="3.600" fill="#fff" />
      <circle cx="9" cy="9" r="2.800" fill="#3f7fe0" />
    </>
  );
}

type TaskItem = { name: string; art: ReactNode; running?: boolean; active?: boolean };

const taskItems: TaskItem[] = [
  {
    name: "Start",
    art: <path d="M3.500 4.500 8 3.900V8.600H3.500ZM8.700 3.800 14.500 3V8.600H8.700ZM3.500 9.300H8V14L3.500 13.400ZM8.700 9.300H14.500V15L8.700 14.200Z" fill="#111" />,
  },
  {
    name: "Search",
    art: (
      <g fill="none" stroke="#222" strokeWidth="1.100">
        <circle cx="10.500" cy="7.500" r="3.800" />
        <path d="M7.800 10.200 3.800 14.500" />
      </g>
    ),
  },
  {
    name: "Task view",
    art: (
      <g fill="none" stroke="#222">
        <path d="M3 3.500V5.500H11V3.500M3 15V13H11V15M3.500 7.500H10.500V11H3.500Z" />
        <path d="M14 3.500V6M14 8V15" strokeWidth="1.300" />
      </g>
    ),
  },
  {
    name: "Microsoft Store",
    art: (
      <>
        <path d="M6 5V3Q6 2 7 2H11Q12 2 12 3V5" fill="none" stroke="#2d6fa8" strokeWidth="1.200" />
        <path d="M1.500 5H16.500V14Q16.500 16 14.500 16H3.500Q1.500 16 1.500 14Z" fill="#1e5c96" />
        <path d="M6 7H8.700V9.700H6Z" fill="#f0523c" />
        <path d="M9.300 7H12V9.700H9.300Z" fill="#8bc53d" />
        <path d="M6 10.300H8.700V13H6Z" fill="#31a8e8" />
        <path d="M9.300 10.300H12V13H9.300Z" fill="#fbc02d" />
      </>
    ),
  },
  {
    name: "Microsoft Edge",
    art: (
      <>
        <path d="M1 8.500A8 8 0 0 1 17 8.500Q17 12.500 12.500 12.500 9.500 12.500 10.500 10 10 6.500 6.500 7 3 7.500 1 8.500Z" fill="url(#edge)" />
        <path d="M1 8.500Q4 6 7 7 5 9 6.500 12.500 9 15.500 15 14 11 18 7 16.700 1 14.500 1 8.500Z" fill="#1769b8" />
        <circle cx="7" cy="12.500" r="3.500" fill="#cfd5da" />
        <path d="M5 13.500 7 12 9 11" stroke="#4b5560" />
      </>
    ),
  },
  { name: "Google Chrome", art: <ChromeLogo /> },
  {
    name: "Excel",
    art: (
      <>
        <path d="M6 2.500H16.500V15.500H6Z" fill="#2aa56a" />
        <path d="M11 2.500H16.500V7H11Z" fill="#35c481" />
        <path d="M6 11H16.500V15.500H6Z" fill="#176c40" />
        <rect x="1" y="5" width="9" height="8.500" rx=".8" fill="#10733f" />
        <path d="M3.500 7 7.500 11.500M7.500 7 3.500 11.500" stroke="#fff" strokeWidth="1.300" />
      </>
    ),
  },
  {
    name: "File Explorer",
    running: true,
    active: true,
    art: (
      <>
        <path d="M2 3H7L8.500 4.500H16V14H2Z" fill="#f3bd3a" />
        <path d="M2 6H16V14H2Z" fill="#fad568" />
        <path d="M5 15V10.500Q5 9.500 6 9.500H12Q13 9.500 13 10.500V15H11V12H7V15Z" fill="#3c8fd0" />
      </>
    ),
  },
  {
    name: "Snagit",
    art: (
      <>
        <path d="M3 4.500 7 7 10 6" fill="none" stroke="#2d6b35" strokeWidth="2" />
        <circle cx="7" cy="3.500" r="1.500" fill="#2b3d2c" />
        <path d="M4 9 13 8 16 14 7 16Z" fill="#f0f1f6" stroke="#26304f" />
        <path d="M4 9 8 12 7 15Z" fill="#a53234" />
        <circle cx="12" cy="12" r="1.800" fill="#4668b5" />
        <path d="M6 7 10 11" stroke="#222" strokeWidth="1.500" />
      </>
    ),
  },
  {
    name: "Your Phone",
    art: (
      <>
        <rect x="2" y="1" width="9" height="15.500" rx="1" fill="#1c86d8" />
        <path d="M2 2Q2 1 3 1H10Q11 1 11 2V8L2 6Z" fill="#46b8f0" />
        <circle cx="13" cy="12.500" r="5" fill="#e4e4e2" stroke="#777" strokeWidth=".7" />
        <text x="13" y="15.300" textAnchor="middle" fontSize="7.500" fontFamily="Open Sans" fontWeight="600" fill="#222">
          16
        </text>
      </>
    ),
  },
  {
    name: "Chrome profile",
    running: true,
    art: (
      <>
        <ChromeLogo />
        <circle cx="12.500" cy="12.500" r="4" fill="#a3a39b" />
        <path d="M9.500 12.500H15.500M10.500 10.500H14.500" stroke="#5e625c" />
      </>
    ),
  },
  {
    name: "Camtasia",
    art: (
      <>
        <rect x="1" y="1" width="16" height="16" rx="1.500" fill="#559b1c" />
        <path d="M1 1H17L1 17Z" fill="#79b62d" />
        <path d="M13 5H6.500Q5 5 5 6.500V11.500Q5 13 6.500 13H13" fill="none" stroke="#fff" strokeWidth="2.200" />
      </>
    ),
  },
  {
    name: "SketchUp",
    running: true,
    art: (
      <>
        <rect x="1.500" y="1.500" width="15" height="15" fill="#f4f8fb" />
        <path d="M4 6Q9 1.500 14 5V13L9 15.500M4.500 8.500Q9 5 12 7.500V12M4 11Q8 8.500 9.500 10.500V13L5 12" fill="none" stroke="#1d5c8f" strokeWidth="1.500" />
      </>
    ),
  },
  {
    name: "LINE",
    running: true,
    art: (
      <>
        <rect x="1" y="1" width="16" height="16" rx="2.500" fill="#0ba80d" />
        <path d="M9 4Q14.500 4.300 14.500 8.300 14 11.500 9 14.800V12.300Q3.500 11.800 3.500 8.200 3.700 4.300 9 4Z" fill="#fff" />
        <path d="M5.500 7V9.500H7M8 7V9.500M9 9.500V7L10.500 9.500V7M13 7H11.500V9.500H13" fill="none" stroke="#0ba80d" strokeWidth=".7" />
      </>
    ),
  },
  {
    name: "Zoom",
    running: true,
    art: (
      <>
        <rect x="1" y="1" width="16" height="16" rx="4" fill="#4a8df0" />
        <rect x="4" y="6" width="7" height="6" rx="1" fill="#fff" />
        <path d="M11.700 8.200 14.500 6.300V11.700L11.700 9.800Z" fill="#fff" />
      </>
    ),
  },
];

function Taskbar() {
  return (
    <footer className="flex h-[27px] shrink-0 bg-[#dad8d5]">
      <div className="flex w-[489px]">
        {taskItems.map((item) => (
          <button
            key={item.name}
            type="button"
            aria-label={item.name}
            className={clsx("flex flex-1 justify-center pt-[5px]", item.active && "bg-[#f2f1ef]")}
          >
            <span className="flex h-full w-full flex-col items-center justify-between">
              <svg viewBox="0 0 18 18" className="size-[17px]">
                {item.art}
              </svg>
              {item.running && (
                <span className={clsx("h-0.5 bg-[#d37c3c]", item.active ? "w-full" : "w-[26px]")} />
              )}
            </span>
          </button>
        ))}
      </div>
      <div className="ml-auto flex items-center gap-2 pr-1 text-[#222]">
        <svg viewBox="0 0 12 14" className="h-3.5 w-3" fill="none" stroke="#222" aria-hidden="true">
          <path d="M10 2 6 8 5 10.500 7.500 9.500 11 3.500Z" />
          <path d="M5 6Q1 8 2 10T7 12" />
        </svg>
        <time className="text-center leading-3">
          2:53 PM
          <br />
          21-Feb-22
        </time>
      </div>
    </footer>
  );
}

export default function App() {
  return (
    <div className="flex min-h-screen flex-col bg-white font-[Lato,'Noto_Sans',sans-serif] text-[8px] leading-3 text-[#222]">
      <Gradients />
      <TitleBar />
      <TabRow />
      <Ribbon />
      <AddressRow />
      <div className="flex grow pt-1">
        <NavigationPane />
        <FileGrid />
      </div>
      <StatusBar />
      <Taskbar />
    </div>
  );
}
